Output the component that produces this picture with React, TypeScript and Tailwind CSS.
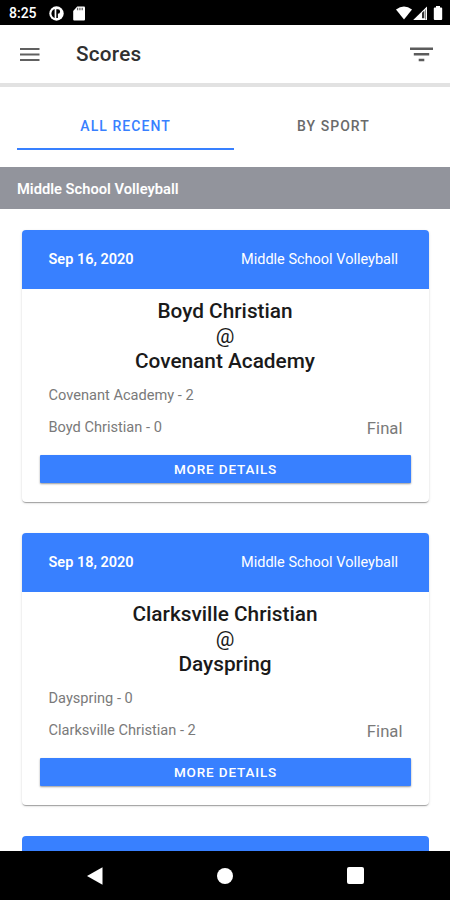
type Game = { date: string; away: string; home: string; awayScore: number; homeScore: number };

const games: Game[] = [
  { date: "Sep 16, 2020", away: "Boyd Christian", home: "Covenant Academy", awayScore: 0, homeScore: 2 },
  { date: "Sep 18, 2020", away: "Clarksville Christian", home: "Dayspring", awayScore: 2, homeScore: 0 },
];

function StatusBar() {
  return (
    <div className="flex h-[25px] shrink-0 items-center bg-black pt-px pr-[7px] pl-[9px] text-white">
      <span className="w-[40px] text-[14px] leading-none font-medium">8:25</span>
      <svg className="h-[15px] w-[15px]" viewBox="0 0 15 15">
        <circle cx="7.5" cy="7.5" r="7.2" fill="#fff" />
        <path d="M5.600 3v9A4.800 4.800 0 0 1 5.600 3z" fill="#000" />
        <path d="M7.300 3.300h1.600a2.200 2.200 0 0 1 0 4.400V12H7.300z" fill="#000" />
      </svg>
      <svg className="ml-[9px] h-[15px] w-[12px]" viewBox="0 0 12 15">
        <path d="M4.2.5H11a1 1 0 0 1 1 1v12a1 1 0 0 1-1 1H1.2a1 1 0 0 1-1-1V5z" fill="#fff" />
        <path d="M4.600 1.800v2.400M6.900 1.800v2.400M9.200 1.800v2.400" stroke="#666" strokeWidth="1.300" />
      </svg>
      <div className="flex-1" />
      <svg className="h-[15px] w-[47px]" viewBox="0 0 47 15">
        <path d="M0 3.600Q8-2.400 16 3.600L8 13.500z" fill="#fff" />
        <path d="M31 0.500V14H17.200z" fill="#fff" />
        <path d="M28.300 4.700V12.300H26V6.700z" fill="#333" />
        <path d="M29.500 3.500V13.500" stroke="#888" strokeWidth="1" />
        <path d="M40 0h4v1.600h1.200q1 0 1 1v10.400q0 1-1 1h-6.400q-1 0-1-1V2.600q0-1 1-1H40z" fill="#fff" />
      </svg>
    </div>
  );
}

function GameCard({ game }: { game: Game }) {
  return (
    <article className="h-[271.500px] shrink-0 rounded-[4px] bg-white shadow-[0_2px_1px_-1px_rgba(0,0,0,0.2),0_1px_1px_0_rgba(0,0,0,0.14),0_1px_3px_0_rgba(0,0,0,0.12)]">
      <div className="flex h-[58.500px] items-center justify-between rounded-t-[4px] bg-[#3880ff] pr-[30.500px] pl-[27px] text-[14.500px] text-white">
        <span className="font-semibold">{game.date}</span>
        <span>Middle School Volleyball</span>
      </div>
      <div className="flex flex-col items-center pt-[10.200px] text-[20.800px] leading-[25px] font-medium text-[#1a1a1a]">
        <span>{game.away}</span>
        <span className="font-normal">@</span>
        <span>{game.home}</span>
      </div>
      <div className="flex h-[80.800px] justify-between pr-[26px] pl-[27px] text-[#7a7a7a]">
        <div className="flex flex-col pt-[5.300px] text-[14.600px] leading-[32px]">
          <span>{game.home} - {game.homeScore}</span>
          <span>{game.away} - {game.awayScore}</span>
        </div>
        <span className="pt-[39.300px] text-[16.700px] leading-[32px]">Final</span>
      </div>
      <button className="mx-[18.500px] flex h-[28.500px] w-[371px] items-center justify-center rounded-[1px] bg-[#3880ff] text-[13.500px] font-medium tracking-[0.850px] text-white shadow-[0_1px_2px_rgba(0,0,0,0.4)]">
        MORE DETAILS
      </button>
    </article>
  );
}

export default function App() {
  return (
    <div className="flex h-[900px] w-[450px] flex-col overflow-hidden bg-white font-[Roboto,sans-serif]">
      <StatusBar />
      <header className="flex h-[62px] shrink-0 items-center border-b-[4px] border-[#e2e2e2] pr-[17px] pl-[20px]">
        <svg className="h-[15px] w-[20px]" viewBox="0 0 20 15">
          <path d="M0 2H19.500M0 7.500H19.500M0 13H19.500" stroke="#606060" strokeWidth="2.200" />
        </svg>
        <h1 className="ml-[36px] flex-1 pt-px text-[20.700px] leading-none font-medium tracking-[0.250px] text-[#303030]">Scores</h1>
        <svg className="h-[15px] w-[23px]" viewBox="0 0 23 15">
          <path d="M0 1.800H23M3.800 7.300H19.200M8.700 13H14.300" stroke="#5c5c5c" strokeWidth="2.600" />
        </svg>
      </header>
      <nav className="flex h-[63px] shrink-0 pr-[17px] pl-[17.300px] text-[14px] font-medium tracking-[1.050px]">
        <div className="flex w-[216.500px] items-center justify-center border-b-2 border-[#3880ff] pt-[17px] text-[#3880ff]">ALL RECENT</div>
        <div className="flex flex-1 items-center justify-center border-b-2 border-transparent pt-[17px] text-[#6a6a6a]">BY SPORT</div>
      </nav>
      <div className="mt-[17.300px] flex h-[42px] shrink-0 items-center bg-[#92949c] pt-[2px] pl-[17px] text-[14.700px] font-semibold text-white">
        Middle School Volleyball
      </div>
      <main className="flex min-h-0 flex-1 flex-col gap-[31.500px] px-[21.500px] pt-[21.200px]">
        {games.map((game) => (
          <GameCard key={game.date} game={game} />
        ))}
        <div className="min-h-0 flex-1 rounded-t-[4px] bg-[#3880ff]" />
      </main>
      <footer className="flex h-[49px] shrink-0 items-center justify-center gap-[114px] bg-black">
        <svg className="h-[18px] w-[16px]" viewBox="0 0 16 18">
          <path d="M0 9L15.500 .2v17.600z" fill="#fff" />
        </svg>
        <div className="h-[16px] w-[16px] rounded-full bg-white" />
        <div className="h-[17px] w-[17px] rounded-[2px] bg-white" />
      </footer>
    </div>
  );
}
